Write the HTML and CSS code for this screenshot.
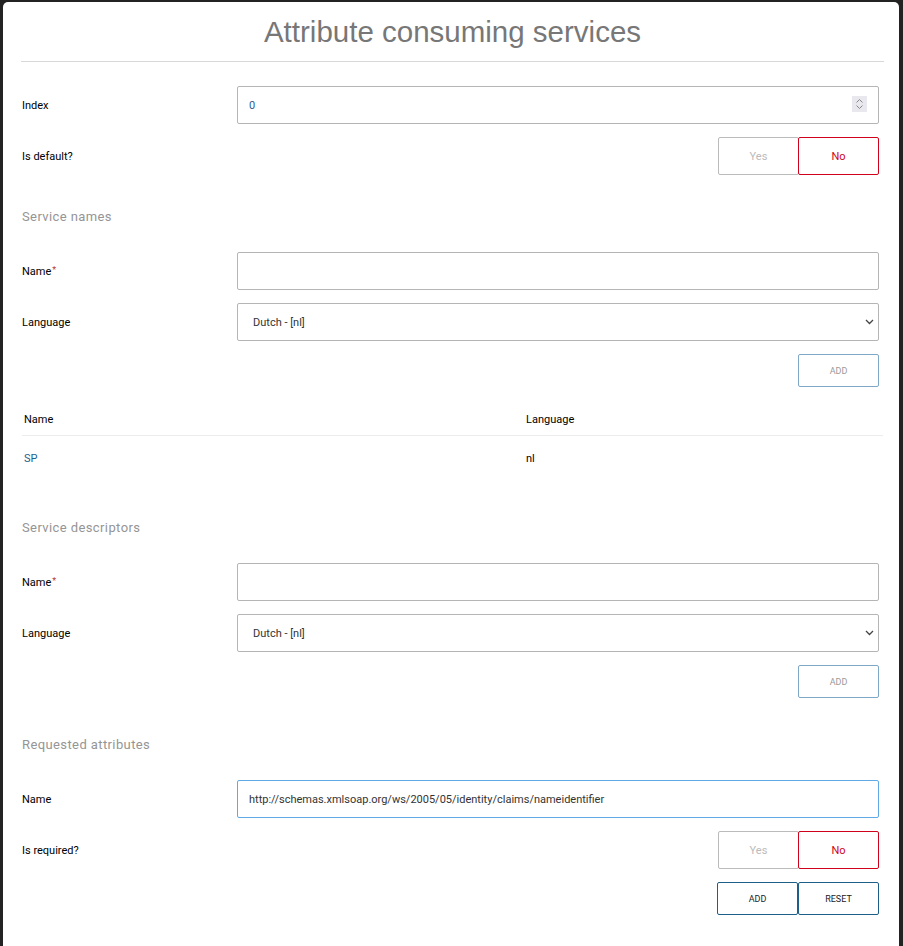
FILE: index.html
```html
<!DOCTYPE html>
<html lang="en">

<head>
    <meta charset="UTF-8">
    <meta name="viewport" content="width=device-width, initial-scale=1.0">
    <title>Attribute consuming services</title>
    <link rel="stylesheet" href="styles.css">
</head>

<body>
    <div class="modal">
        <div class="modal-header">Attribute consuming services</div>

        <div class="form-row first">
            <label>Index</label>
            <div class="field">
                <input class="text-input index-input" type="text" value="0">
                <span class="spinner">
                    <svg width="15" height="16" viewBox="0 0 15 16">
                        <path d="M4.5 6.5 L7.5 3.5 L10.5 6.5" fill="none" stroke="#888" stroke-width="1"/>
                        <path d="M4.5 9.5 L7.5 12.5 L10.5 9.5" fill="none" stroke="#888" stroke-width="1"/>
                    </svg>
                </span>
            </div>
        </div>
        <div class="form-row">
            <label>Is default?</label>
            <div class="toggle">
                <button class="toggle-btn">Yes</button>
                <button class="toggle-btn selected">No</button>
            </div>
        </div>

        <h3 class="section-title">Service names</h3>
        <div class="form-row">
            <label>Name<span class="required">*</span></label>
            <input class="text-input" type="text">
        </div>
        <div class="form-row">
            <label>Language</label>
            <div class="field">
                <select class="text-input select-input">
                    <option>Dutch - [nl]</option>
                </select>
                <svg class="chevron" width="9" height="6" viewBox="0 0 9 6">
                    <path d="M1 1 L4.5 4.5 L8 1" fill="none" stroke="#444" stroke-width="1.3"/>
                </svg>
            </div>
        </div>
        <div class="actions">
            <button class="action-btn" disabled>ADD</button>
        </div>

        <table class="list">
            <thead>
                <tr>
                    <th class="col-name">Name</th>
                    <th>Language</th>
                </tr>
            </thead>
            <tbody>
                <tr>
                    <td class="col-name link">SP</td>
                    <td>nl</td>
                </tr>
            </tbody>
        </table>

        <h3 class="section-title">Service descriptors</h3>
        <div class="form-row">
            <label>Name<span class="required">*</span></label>
            <input class="text-input" type="text">
        </div>
        <div class="form-row">
            <label>Language</label>
            <div class="field">
                <select class="text-input select-input">
                    <option>Dutch - [nl]</option>
                </select>
                <svg class="chevron" width="9" height="6" viewBox="0 0 9 6">
                    <path d="M1 1 L4.5 4.5 L8 1" fill="none" stroke="#444" stroke-width="1.3"/>
                </svg>
            </div>
        </div>
        <div class="actions">
            <button class="action-btn" disabled>ADD</button>
        </div>

        <h3 class="section-title">Requested attributes</h3>
        <div class="form-row">
            <label>Name</label>
            <input class="text-input focused" type="text" value="http://schemas.xmlsoap.org/ws/2005/05/identity/claims/nameidentifier">
        </div>
        <div class="form-row">
            <label>Is required?</label>
            <div class="toggle">
                <button class="toggle-btn">Yes</button>
                <button class="toggle-btn selected">No</button>
            </div>
        </div>
        <div class="actions">
            <button class="action-btn active">ADD</button>
            <button class="action-btn active">RESET</button>
        </div>
    </div>
</body>

</html>
```

FILE: styles.css
```css
body {
    margin: 0;
    padding: 0;
    background-color: #232323;
    font-family: Roboto, "Liberation Sans", Arial, sans-serif;
    font-size: 11px;
    color: #111;
}

.modal {
    margin: 2px 4px 0 3px;
    padding: 0 15px 31px 18px;
    background-color: #fff;
    border-radius: 5px 5px 0 0;
    min-height: 913px;
    box-sizing: border-box;
}

.modal-header {
    padding: 10px 0 9px;
    line-height: 40px;
    text-align: center;
    font-family: "Liberation Sans", Arial, sans-serif;
    font-size: 29.5px;
    color: #777;
    border-bottom: 1px solid #d8d8d8;
}

.form-row {
    display: grid;
    grid-template-columns: 215px 1fr;
    align-items: center;
    margin: 0 5px 13px 1px;
}

.form-row.first {
    margin-top: 24px;
}

.form-row label {
    color: #000;
}

.required {
    color: #b83a3a;
    font-size: 9px;
    margin-left: 1px;
    position: relative;
    top: -2px;
}

.field {
    position: relative;
}

.text-input {
    display: block;
    width: 100%;
    height: 38px;
    box-sizing: border-box;
    padding: 0 11px;
    border: 1px solid #b5b5b5;
    border-radius: 2px;
    font-family: Roboto, "Liberation Sans", Arial, sans-serif;
    font-size: 11px;
    color: #333;
    background-color: #fff;
    outline: none;
}

.index-input {
    color: #2d5f92;
}

.focused {
    border-color: #5ea9e6;
}

.spinner {
    position: absolute;
    right: 12px;
    top: 10px;
    width: 15px;
    height: 16px;
    background-color: #e8e8ee;
}

.spinner svg {
    display: block;
}

.select-input {
    appearance: none;
    -webkit-appearance: none;
    padding-left: 15px;
}

.chevron {
    position: absolute;
    right: 5px;
    top: 16px;
}

.toggle {
    display: flex;
    justify-content: flex-end;
}

.toggle-btn {
    width: 81px;
    height: 38px;
    background-color: #fff;
    border: 1px solid #bbb;
    border-radius: 2px;
    font-family: Roboto, "Liberation Sans", Arial, sans-serif;
    font-size: 11px;
    color: #bbb;
    padding: 0;
    cursor: pointer;
}

.toggle-btn + .toggle-btn {
    margin-left: -1px;
}

.toggle-btn.selected {
    border-color: #d0021b;
    color: #d0021b;
    position: relative;
}

.section-title {
    margin: 32px 0 25px 1px;
    font-size: 13px;
    line-height: 20px;
    font-weight: normal;
    letter-spacing: 0.4px;
    color: #959595;
}

.actions + .section-title,
.list + .section-title {
    margin-top: 37px;
}

.actions {
    display: flex;
    justify-content: flex-end;
    margin: 0 5px 0 1px;
}

.action-btn {
    width: 81px;
    height: 33px;
    padding: 0;
    background-color: #fff;
    border: 1px solid #7fa8c6;
    border-radius: 2px;
    font-family: Roboto, "Liberation Sans", Arial, sans-serif;
    font-size: 9px;
    color: #9a9a9a;
}

.action-btn.active {
    border-color: #1d5f86;
    color: #222;
    cursor: pointer;
}

.list {
    width: calc(100% - 2px);
    margin: 17px 1px 0;
    border-collapse: collapse;
}

.list th {
    text-align: left;
    font-weight: normal;
    color: #000;
    padding: 7px 2px;
    line-height: 17px;
    border-bottom: 1px solid #ececec;
}

.list td {
    padding: 14px 2px;
    line-height: 17px;
    color: #000;
}

.list .col-name {
    width: 498px;
}

.link {
    color: #1f5f8d !important;
}
```
